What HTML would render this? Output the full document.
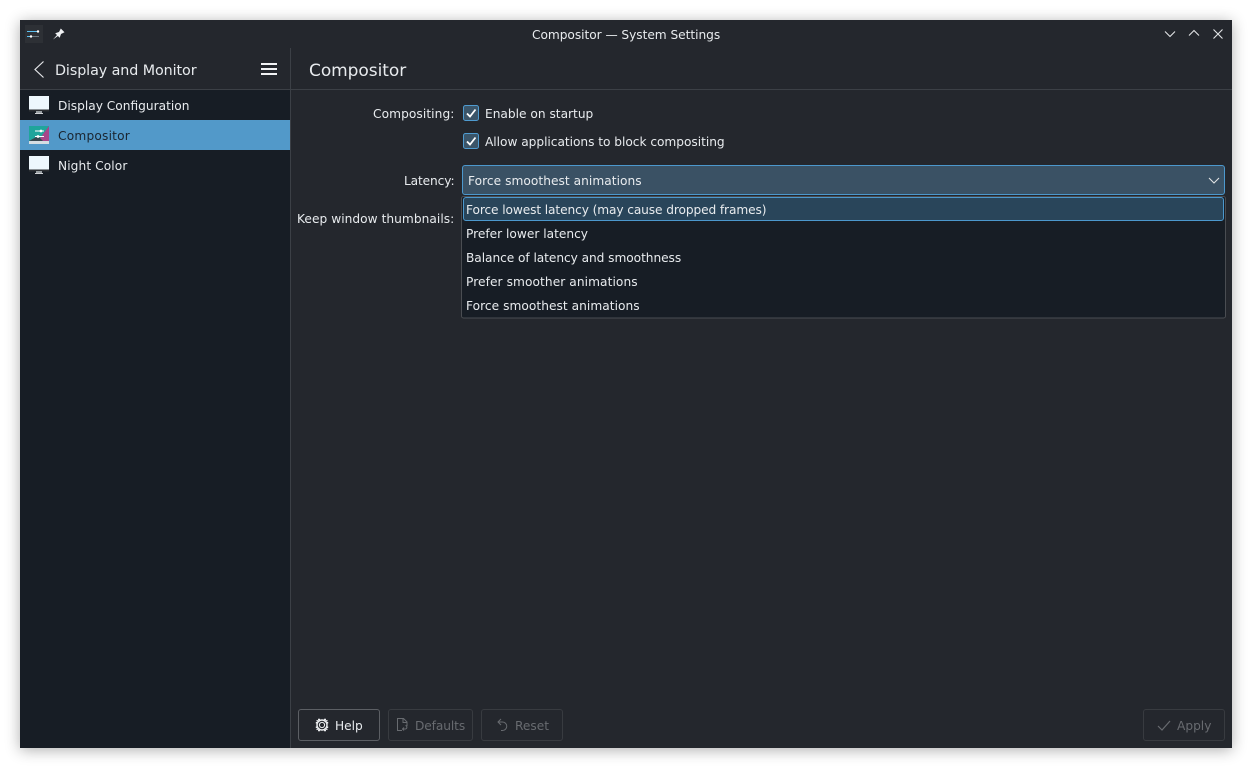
<!DOCTYPE html>
<html><head><meta charset="utf-8">
<style>
html,body{margin:0;padding:0;width:1252px;height:768px;overflow:hidden;background:#fff}
#win{position:absolute;left:20px;top:20px;width:1212px;height:728px;background:#24272d;box-shadow:0 2px 14px rgba(0,0,0,.32);overflow:hidden}
.a{position:absolute}
.t{position:absolute;white-space:nowrap;font-family:"DejaVu Sans",sans-serif;font-size:12.2px;line-height:18px;color:#e8ebee;letter-spacing:0}
svg{position:absolute;overflow:visible}
</style></head><body>
<div id="win"></div>
<!-- Sidebar -->
<div class="a" style="left:20px;top:90px;width:270px;height:658px;background:#171d25"></div>
<div class="a" style="left:20px;top:120px;width:270px;height:30px;background:#5299c9"></div>
<div class="a" style="left:290px;top:48px;width:1px;height:700px;background:#3c4046"></div>
<div class="a" style="left:20px;top:89px;width:1212px;height:1px;background:#3c4046"></div>

<!-- Title bar -->
<svg style="left:0;top:0" width="1252" height="768" fill="none">
<rect x="25" y="25" width="18" height="18" fill="#2d3035"/>
<path d="M27 31.500h12M27 36.500h12" stroke="#6d7880" stroke-width="1"/>
<path d="M27 31.500h10M27 36.500h5" stroke="#5cc0f0" stroke-width="1"/>
<circle cx="38" cy="31.500" r="1.200" fill="#fff"/><circle cx="31" cy="36.500" r="1.200" fill="#fff"/>
<path d="M53 39.500l4-4.500-1.800-1.700 3.800-1.300 1.800-3.500 3.700 3.700-3.500 1.800-1.300 3.800-1.800-1.800z" fill="#f0f2f4"/>
<path d="M1165 31.500l5 5 5-5M1189 35.500l5-5 5 5M1213.500 29.500l9 9M1222.500 29.500l-9 9" stroke="#e2e4e6" stroke-width="1.100"/>
<path d="M43.500 61.500l-8.500 8 8.500 8" stroke="#e4e6e9" stroke-width="1.200"/>
<path d="M261 64h16M261 69h16M261 74h16" stroke="#f2f3f5" stroke-width="2"/>
<!-- sidebar icons -->
<g><rect x="29" y="96" width="20" height="15" fill="#eef7fd"/><rect x="29" y="109.500" width="20" height="2" fill="#2a2d31"/><rect x="36" y="111" width="6" height="2" fill="#9aa0a4"/><rect x="35" y="113" width="8" height="1" fill="#d0d3d6"/></g>
<g><rect x="29" y="156" width="20" height="15" fill="#eef7fd"/><rect x="29" y="169.500" width="20" height="2" fill="#2a2d31"/><rect x="36" y="171" width="6" height="2" fill="#9aa0a4"/><rect x="35" y="173" width="8" height="1" fill="#d0d3d6"/></g>
<rect x="29" y="126" width="20" height="15" fill="#1fa59b"/>
<path d="M49 126v15H38z" fill="#a8458a"/>
<path d="M29 141l9-5 5 5z" fill="#37474f"/>
<rect x="29" y="141" width="20" height="3" fill="#d5dde2"/>
<path d="M35 131h9M35 136.500h9" stroke="#fff" stroke-width="1"/>
<circle cx="41" cy="131" r="1.400" fill="#fff"/><circle cx="38" cy="136.500" r="1.400" fill="#fff"/>
<!-- Checkboxes -->
<rect x="463.500" y="105.500" width="15" height="15" rx="2" fill="#3b5569" stroke="#4f9bd0"/>
<path d="M467 113.500l3 3 5.500-7" stroke="#fff" stroke-width="1.800"/>
<rect x="463.500" y="133.500" width="15" height="15" rx="2" fill="#3b5569" stroke="#4f9bd0"/>
<path d="M467 141.500l3 3 5.500-7" stroke="#fff" stroke-width="1.800"/>
<!-- Combo -->
<rect x="462.500" y="165.500" width="762" height="29" rx="2.500" fill="#3a5164" stroke="#4c98cd"/>
<path d="M1209 178l5 5 5-5" stroke="#e2e4e6" stroke-width="1.100"/>
<!-- Popup -->
<rect x="461.500" y="196.500" width="764" height="121.500" rx="2" fill="#171d25" stroke="#4a4d52"/>
<rect x="463.500" y="197.500" width="760" height="23" rx="2.500" fill="#29455a" stroke="#4c98cd"/>
<!-- Buttons -->
<rect x="298.500" y="709.500" width="81" height="31" rx="2.500" fill="#24272d" stroke="#5c5f64"/>
<rect x="388.500" y="709.500" width="84" height="31" rx="2.500" fill="#24272d" stroke="#383b40"/>
<rect x="481.500" y="709.500" width="81" height="31" rx="2.500" fill="#24272d" stroke="#383b40"/>
<rect x="1143.500" y="709.500" width="81" height="31" rx="2.500" fill="#24272d" stroke="#383b40"/>
<!-- Help icon -->
<circle cx="322" cy="725" r="5" stroke="#eceef0" stroke-width="1.400"/>
<circle cx="322" cy="725" r="2.600" stroke="#eceef0" stroke-width="1"/>
<path d="M316.500 720.500l3 1M327.500 720.500l-3 1M316.500 729.500l3-1M327.500 729.500l-3-1M318 719.500h2M324 719.500h2M318 730.500h2M324 730.500h2M316.500 722v1.500M327.500 722v1.500M316.500 726.500v1.500M327.500 726.500v1.500" stroke="#eceef0" stroke-width="1.400"/>
<!-- Defaults icon -->
<path d="M402 730.500h-4.500v-12h6l3.500 3.500v4M403 718.500v4h4" stroke="#686b70" stroke-width="1"/>
<path d="M404 727.500l-1.500 1.500 1.500 1.500M402.500 729h3a1.800 1.800 0 0 0 0-3.500" stroke="#686b70" stroke-width="1"/>
<!-- Reset icon -->
<path d="M501 719l-3 3 3 3M498 722h4.500a4.200 4.200 0 0 1 0 8.500H501" stroke="#686b70" stroke-width="1"/>
<!-- Apply icon -->
<path d="M1158 726l4 4 8-9" stroke="#686b70" stroke-width="1.200"/>
</svg>

<div class="t" style="left:532px;top:26px;letter-spacing:-.04px">Compositor — System Settings</div>
<div class="t" style="left:55px;top:61px;font-size:14.3px;line-height:20px;letter-spacing:-.08px">Display and Monitor</div>
<div class="t" style="left:309px;top:60px;font-size:17px;line-height:22px;letter-spacing:-.05px">Compositor</div>
<div class="t" style="left:58px;top:97px">Display Configuration</div>
<div class="t" style="left:58px;top:127px;color:#1a2530;letter-spacing:.2px">Compositor</div>
<div class="t" style="left:58px;top:157px;letter-spacing:.09px">Night Color</div>

<div class="t" style="left:373px;top:105px;letter-spacing:.08px">Compositing:</div>
<div class="t" style="left:485px;top:105px">Enable on startup</div>
<div class="t" style="left:485px;top:133px;letter-spacing:-.03px">Allow applications to block compositing</div>
<div class="t" style="left:404px;top:172px;letter-spacing:-.12px">Latency:</div>
<div class="t" style="left:468px;top:172px;letter-spacing:.04px">Force smoothest animations</div>
<div class="t" style="left:297px;top:210px;letter-spacing:.04px">Keep window thumbnails:</div>
<div class="t" style="left:466px;top:201px;letter-spacing:-.106px">Force lowest latency (may cause dropped frames)</div>
<div class="t" style="left:466px;top:225px">Prefer lower latency</div>
<div class="t" style="left:466px;top:249px;letter-spacing:-.06px">Balance of latency and smoothness</div>
<div class="t" style="left:466px;top:273px;letter-spacing:.077px">Prefer smoother animations</div>
<div class="t" style="left:466px;top:297px;letter-spacing:.04px">Force smoothest animations</div>

<div class="t" style="left:335px;top:717px">Help</div>
<div class="t" style="left:415px;top:717px;color:#686b70;letter-spacing:-.1px">Defaults</div>
<div class="t" style="left:515px;top:717px;color:#686b70">Reset</div>
<div class="t" style="left:1177px;top:717px;color:#686b70">Apply</div>
</body></html>
